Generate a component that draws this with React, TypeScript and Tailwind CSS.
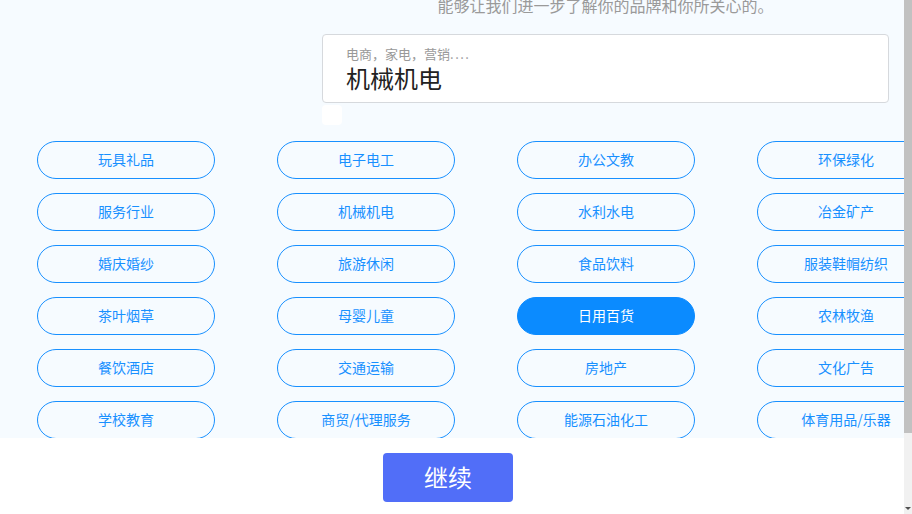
const industries = [
  "玩具礼品", "电子电工", "办公文教", "环保绿化",
  "服务行业", "机械机电", "水利水电", "冶金矿产",
  "婚庆婚纱", "旅游休闲", "食品饮料", "服装鞋帽纺织",
  "茶叶烟草", "母婴儿童", "日用百货", "农林牧渔",
  "餐饮酒店", "交通运输", "房地产", "文化广告",
  "学校教育", "商贸/代理服务", "能源石油化工", "体育用品/乐器",
];

const selected = "日用百货";

export default function App() {
  return (
    <div className="w-[912px] h-[514px] flex overflow-hidden font-['Noto_Sans_CJK_SC','Noto_Sans',sans-serif]">
      <div className="flex-1 min-w-0 flex flex-col">
        {/* scrollable form area */}
        <div className="h-[438px] bg-[#f6fbff] overflow-hidden">
          <div className="pl-[322px] pr-[15px]">
            <p className="-mt-[7px] text-center text-[16px] leading-6 text-[#9a9a9a]">
              能够让我们进一步了解你的品牌和你所关心的。
            </p>
            <div className="mt-[17px] h-[69px] rounded border border-[#d6d9dd] bg-white pl-[23px] pr-6 pt-[11px]">
              <div className="text-[13px] leading-4 text-[#999]">
                电商，家电，营销<span className="tracking-[1.5px]">....</span>
              </div>
              <div className="mt-[2px] text-[24px] leading-7 text-[#222]">机械机电</div>
            </div>
            <div className="mt-[2px] w-[20px] h-[20px] rounded bg-white" />
          </div>

          <div className="mt-[16px] pl-[37px] grid grid-cols-[repeat(4,178px)] gap-x-[62px] gap-y-[14px]">
            {industries.map((name) => (
              <button
                key={name}
                className={`h-[38px] pb-[2px] rounded-full border text-[14px] ${
                  name === selected
                    ? "bg-[#0b8bff] border-[#0b8bff] text-white"
                    : "border-[#1890ff] text-[#1890ff]"
                }`}
              >
                {name}
              </button>
            ))}
          </div>
        </div>

        {/* footer */}
        <div className="flex-1 bg-white pl-[383px] pt-[15px]">
          <button className="w-[130px] h-[49px] pb-[2px] rounded bg-[#516ef8] text-white text-[24px]">
            继续
          </button>
        </div>
      </div>

      {/* page scrollbar */}
      <div className="w-[8px] flex flex-col bg-[#f1f1f1]">
        <div className="h-[433px] bg-[#c1c1c1]" />
        <div className="flex-1 flex items-end justify-center pb-[4px]">
          <div className="w-0 h-0 border-l-[3px] border-r-[3px] border-t-[3px] border-l-transparent border-r-transparent border-t-[#505050]" />
        </div>
      </div>
    </div>
  );
}
